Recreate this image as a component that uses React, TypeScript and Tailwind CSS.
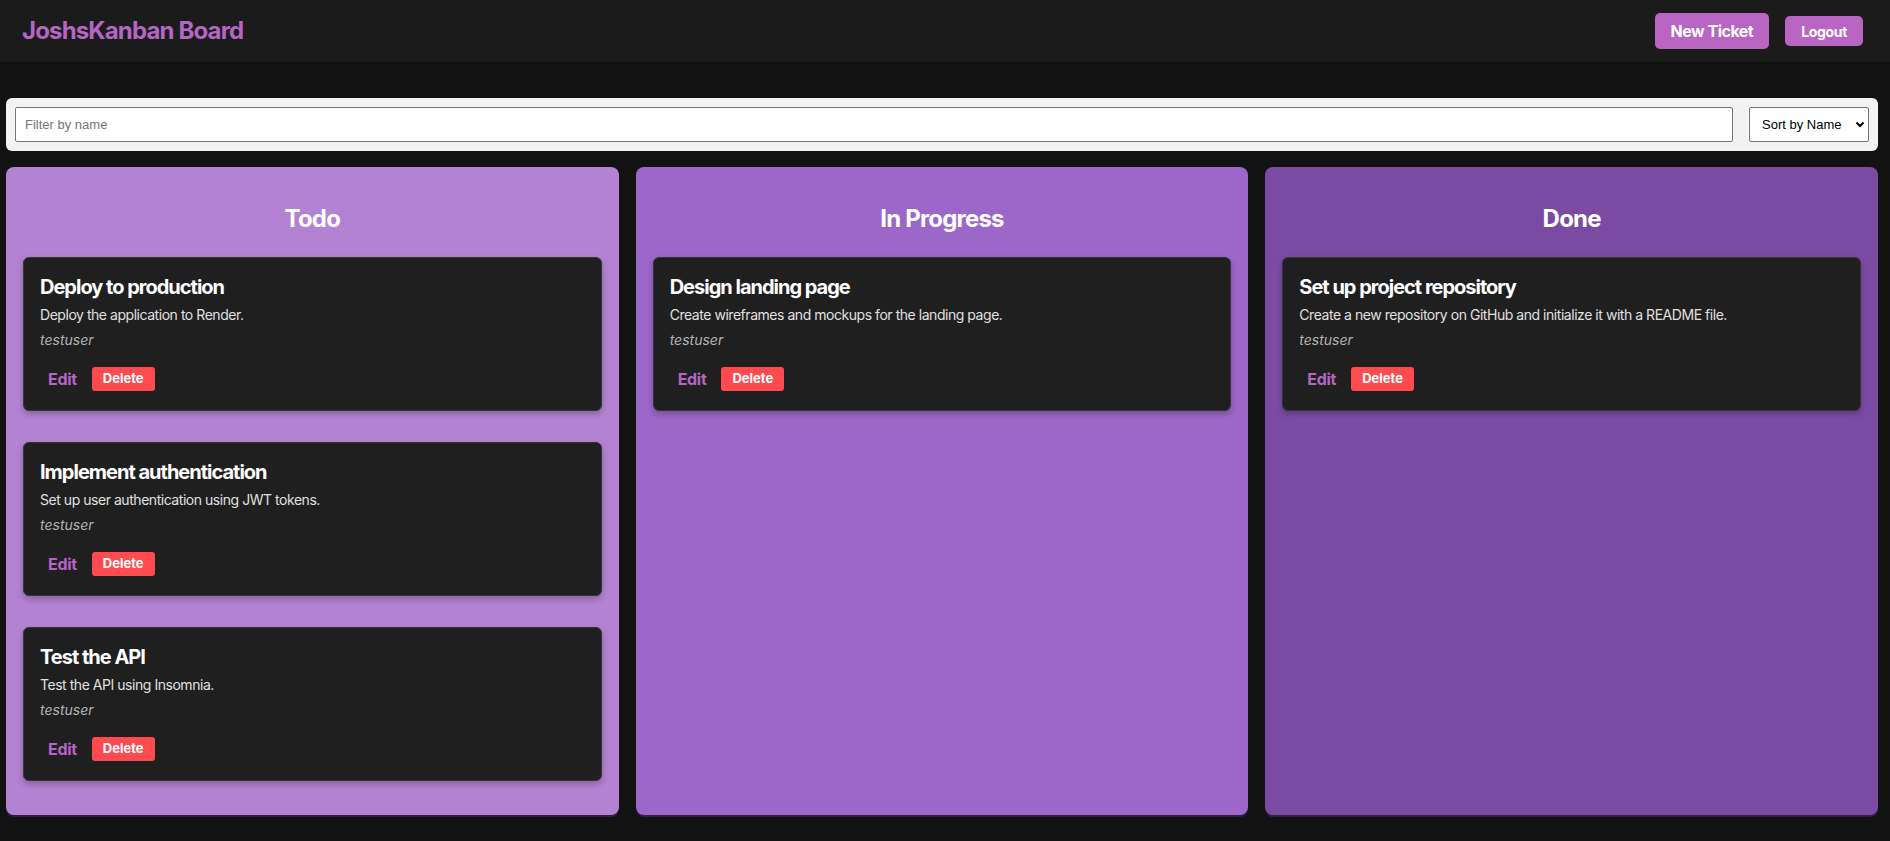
import React from "react";

type Ticket = { title: string; desc: string; user: string };

const columns: { name: string; bg: string; tickets: Ticket[] }[] = [
  {
    name: "Todo",
    bg: "bg-[#b482d2]",
    tickets: [
      { title: "Deploy to production", desc: "Deploy the application to Render.", user: "testuser" },
      { title: "Implement authentication", desc: "Set up user authentication using JWT tokens.", user: "testuser" },
      { title: "Test the API", desc: "Test the API using Insomnia.", user: "testuser" },
    ],
  },
  {
    name: "In Progress",
    bg: "bg-[#9d67c9]",
    tickets: [
      { title: "Design landing page", desc: "Create wireframes and mockups for the landing page.", user: "testuser" },
    ],
  },
  {
    name: "Done",
    bg: "bg-[#7b4ba4]",
    tickets: [
      { title: "Set up project repository", desc: "Create a new repository on GitHub and initialize it with a README file.", user: "testuser" },
    ],
  },
];

function Card({ t }: { t: Ticket }) {
  return (
    <div className="bg-[#1f1f1f] border border-[#353535] rounded-[6px] pt-[17px] pb-[19px] px-[16px] shadow-[0_3px_6px_rgba(0,0,0,0.25)]">
      <h3 className="text-[20px] leading-[24px] font-bold text-white tracking-[-1px]">{t.title}</h3>
      <p className="mt-[6px] text-[14px] leading-[20px] text-[#e0e0e0] tracking-[-0.46px]">{t.desc}</p>
      <p className="mt-[5px] text-[14px] leading-[20px] italic text-[#b3b3b3]">{t.user}</p>
      <div className="mt-[17px] flex items-center gap-[7px]">
        <button className="px-[8px] h-[24px] text-[16px] font-bold text-[#b565c4] tracking-[-0.3px]">Edit</button>
        <button className="h-[24px] px-[11px] rounded-[3px] bg-[#ff4a4f] text-white text-[13px] font-bold">Delete</button>
      </div>
    </div>
  );
}

export default function App() {
  return (
    <div className="min-h-screen bg-[#121212] font-['Inter',sans-serif]">
      <header className="h-[62px] bg-[#1b1b1b] flex items-center justify-between pl-[22px] pr-[27px]">
        <h1 className="text-[24px] font-bold text-[#b565c4] tracking-[-0.85px]">JoshsKanban Board</h1>
        <div className="flex items-center gap-4">
          <button className="h-[36px] px-4 rounded-[5px] bg-[#b865c4] text-white font-bold text-[16px] tracking-[-0.5px]">New Ticket</button>
          <button className="h-[30px] px-4 rounded-[5px] bg-[#b865c4] text-white font-bold text-[14px] tracking-[-0.33px]">Logout</button>
        </div>
      </header>
      <main className="pl-[6px] pr-[12px] pt-[36px] pb-[26px]">
        <div className="h-[53px] rounded-[6px] bg-[#f2f2f2] flex items-center px-[9px] gap-4">
          <input
            className="flex-1 h-[35px] border border-[#767676] rounded-[2px] bg-white px-[9px] text-[13px] font-['Liberation_Sans',Arial,sans-serif] text-black placeholder:text-[#757575] outline-none"
            placeholder="Filter by name"
          />
          <div className="relative w-[120px] h-[35px]">
            <select className="appearance-none w-full h-full border border-[#767676] rounded-[2px] bg-white pl-[12px] text-[13px] font-['Liberation_Sans',Arial,sans-serif] text-black outline-none">
              <option>Sort by Name</option>
              <option>Sort by Date</option>
            </select>
            <svg className="absolute right-[4px] top-[14px] pointer-events-none" width="10" height="7" viewBox="0 0 10 7">
              <path d="M1.5 1.5 L5 5 L8.5 1.5" stroke="#000" strokeWidth="2" fill="none" />
            </svg>
          </div>
        </div>
        <div className="grid grid-cols-3 gap-[17px] mt-[16px]">
          {columns.map((c) => (
            <section key={c.name} className={`${c.bg} rounded-[8px] pt-[37px] px-[17px] pb-[34px] shadow-[0_2px_0_rgba(80,30,120,0.6)]`}>
              <h2 className="text-[24px] leading-[29px] font-bold text-white text-center tracking-[-0.8px]">{c.name}</h2>
              <div className="mt-[24px] flex flex-col gap-[31px]">
                {c.tickets.map((t) => (
                  <Card key={t.title} t={t} />
                ))}
              </div>
            </section>
          ))}
        </div>
      </main>
    </div>
  );
}
